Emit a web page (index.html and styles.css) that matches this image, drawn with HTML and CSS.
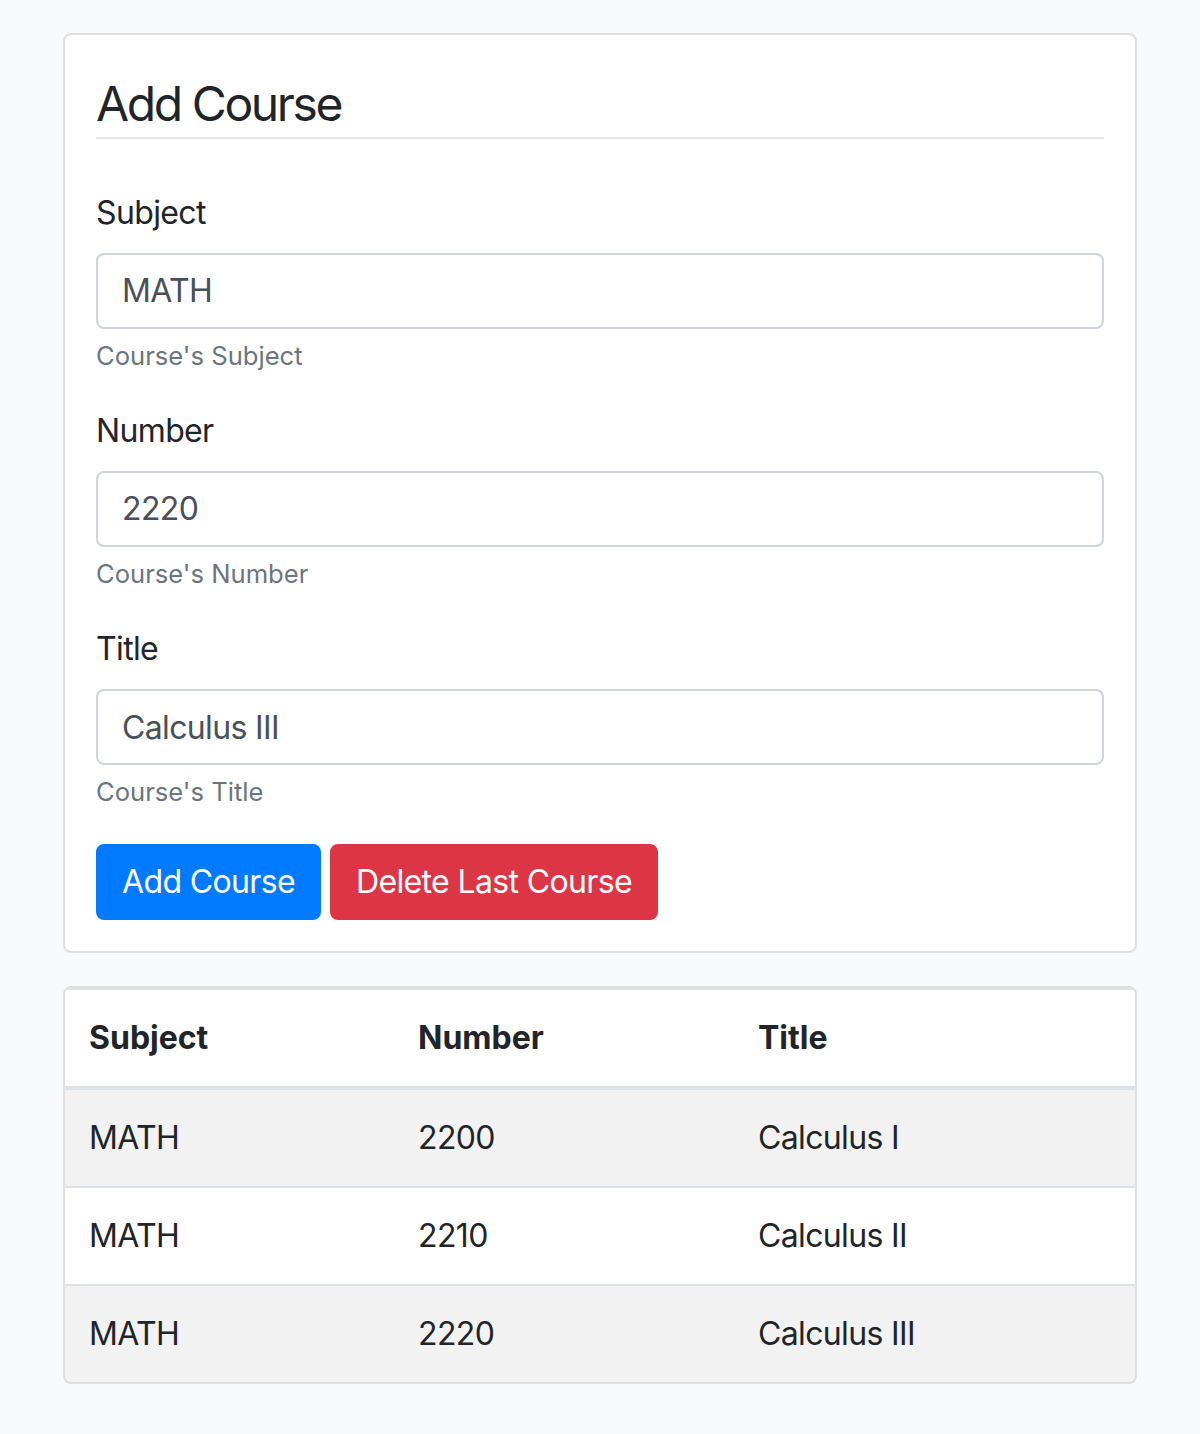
FILE: index.html
```html
<!DOCTYPE html>
<html>
<head>
<meta charset="utf-8">
<link rel="stylesheet" href="styles.css">
</head>
<body>
<div class="container">
  <div class="card form-card">
    <h4 class="title">Add Course</h4>
    <div class="form-group">
      <label class="label">Subject</label>
      <input class="input" type="text" value="MATH">
      <small class="help">Course's Subject</small>
    </div>
    <div class="form-group">
      <label class="label">Number</label>
      <input class="input" type="text" value="2220">
      <small class="help">Course's Number</small>
    </div>
    <div class="form-group">
      <label class="label">Title</label>
      <input class="input" type="text" value="Calculus III">
      <small class="help">Course's Title</small>
    </div>
    <div class="actions">
      <button class="btn btn-primary">Add Course</button>
      <button class="btn btn-danger">Delete Last Course</button>
    </div>
  </div>
  <div class="card table-card">
    <table class="table">
      <thead>
        <tr><th class="c1">Subject</th><th class="c2">Number</th><th class="c3">Title</th></tr>
      </thead>
      <tbody>
        <tr><td>MATH</td><td>2200</td><td>Calculus I</td></tr>
        <tr><td>MATH</td><td>2210</td><td>Calculus II</td></tr>
        <tr><td>MATH</td><td>2220</td><td>Calculus III</td></tr>
      </tbody>
    </table>
  </div>
</div>
</body>
</html>
```
FILE: styles.css
```css
* { box-sizing: border-box; }
html, body { margin: 0; padding: 0; }
body {
  background: #f8f9fa;
  font-family: Inter, "Noto Sans", "Liberation Sans", sans-serif;
  font-size: 32px;
  line-height: 1.5;
  letter-spacing: -0.02em;
  color: #212529;
}
.container {
  width: 1074px;
  margin: 0 0 0 63px;
  padding-top: 33px;
}
.card {
  background: #fff;
  border: 2px solid #dfdfdf;
  border-radius: 8px;
}
.form-card {
  padding: 40px 31px 31px;
}
.title {
  margin: 0 0 50px;
  font-size: 48px;
  font-weight: 400;
  line-height: 1.2;
  letter-spacing: -0.05em;
  padding-bottom: 4px;
  border-bottom: 2px solid #e5e5e5;
}
.form-group {
  display: flex;
  flex-direction: column;
  margin-bottom: 32px;
}
.label {
  display: block;
  margin-bottom: 16px;
}
.input {
  display: block;
  width: 100%;
  height: 76px;
  padding: 12px 24px;
  font: inherit;
  letter-spacing: inherit;
  color: #495057;
  background: #fff;
  border: 2px solid #ced4da;
  border-radius: 8px;
  outline: none;
}
.help {
  display: block;
  margin-top: 8px;
  font-size: 25.6px;
  line-height: 1.5;
  letter-spacing: 0;
  color: #6c757d;
}
.actions {
  display: flex;
  gap: 9px;
}
.btn {
  font: inherit;
  letter-spacing: inherit;
  color: #fff;
  padding: 12px 24px;
  height: 76px;
  line-height: 48px;
  border: 2px solid transparent;
  border-radius: 8px;
}
.btn-primary { background: #007bff; border-color: #007bff; }
.btn-danger { background: #dc3545; border-color: #dc3545; }
.table-card {
  margin-top: 33px;
  overflow: hidden;
}
.table {
  width: 100%;
  border-collapse: collapse;
}
.table th, .table td {
  text-align: left;
  padding: 24px;
  border-top: 2px solid #dee2e6;
  vertical-align: top;
}
.table th { font-weight: 700; letter-spacing: 0; border-bottom: 4px solid #dee2e6; }
.table tbody tr:first-child td { border-top: 0; }
.table tbody tr:nth-child(odd) { background: #f2f2f2; }
.c1 { width: 329px; }
.c2 { width: 340px; }
.c3 { width: 401px; }
```
